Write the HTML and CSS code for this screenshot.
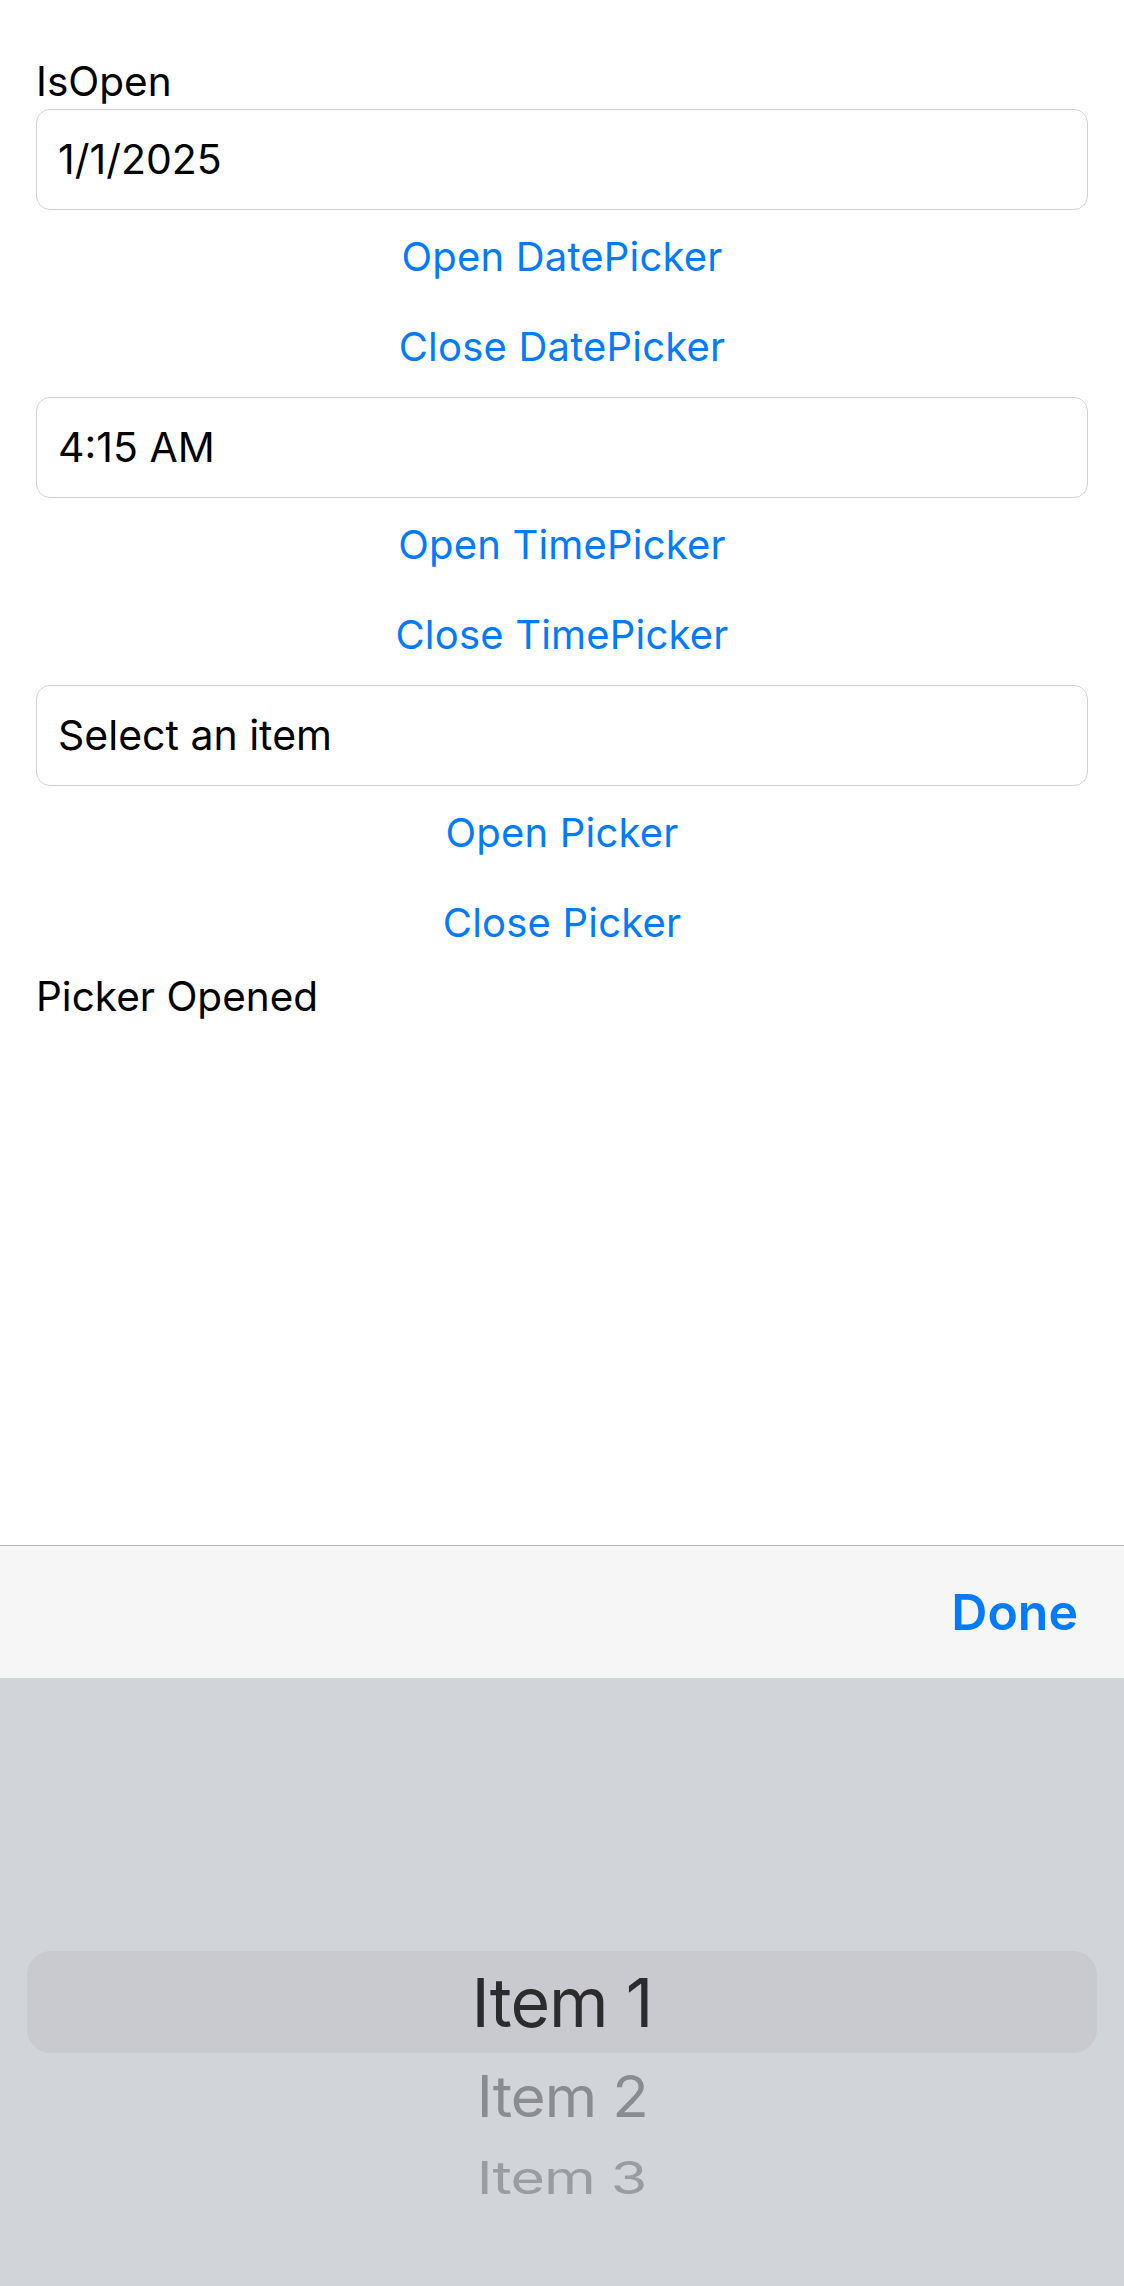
FILE: index.html
```html
<!DOCTYPE html>
<html lang="en">
<head>
<meta charset="utf-8">
<title>IsOpen</title>
<link rel="stylesheet" href="styles.css">
</head>
<body>
<div class="page">
  <main class="content">
    <div class="label">IsOpen</div>
    <div class="entry">1/1/2025</div>
    <div class="button">Open DatePicker</div>
    <div class="button">Close DatePicker</div>
    <div class="entry">4:15 AM</div>
    <div class="button">Open TimePicker</div>
    <div class="button">Close TimePicker</div>
    <div class="entry">Select an item</div>
    <div class="button">Open Picker</div>
    <div class="button">Close Picker</div>
    <div class="label label-status">Picker Opened</div>
  </main>
  <section class="sheet">
    <div class="toolbar">
      <span class="done">Done</span>
    </div>
    <div class="wheel">
      <div class="row row-selected"><span class="item item-1">Item 1</span></div>
      <div class="row row-2"><span class="item item-2">Item 2</span></div>
      <div class="row row-3"><span class="item item-3">Item 3</span></div>
    </div>
  </section>
</div>
</body>
</html>
```
FILE: styles.css
```css
* {
  box-sizing: border-box;
}

html, body {
  margin: 0;
  padding: 0;
  background: #ffffff;
}

body {
  font-family: Inter, "Noto Sans", "Liberation Sans", sans-serif;
  color: #000000;
}

.page {
  display: flex;
  flex-direction: column;
  height: 2286px;
}

.content {
  flex: 1;
  display: flex;
  flex-direction: column;
  gap: 7px;
  padding: 61px 36px 0 36px;
}

.label {
  font-size: 40.5px;
  line-height: 42px;
  height: 42px;
  margin-bottom: -1px;
}

.label-status {
  margin-top: 3px;
}

.entry {
  height: 101px;
  border: 1px solid #d1d1d6;
  border-radius: 14px;
  padding: 0 21px;
  display: flex;
  align-items: center;
  font-size: 41px;
  line-height: 1;
}

.button {
  height: 83px;
  padding-bottom: 4px;
  display: flex;
  align-items: center;
  justify-content: center;
  font-size: 40px;
  letter-spacing: 0.2px;
  color: #007aff;
}

.sheet {
  height: 741px;
  display: flex;
  flex-direction: column;
}

.toolbar {
  height: 133px;
  border-top: 1px solid #b4b4b6;
  background: #f6f6f6;
  display: flex;
  align-items: center;
  justify-content: flex-end;
  padding: 0 46px 0 0;
}

.done {
  font-size: 50px;
  font-weight: 600;
  color: #007aff;
}

.wheel {
  flex: 1;
  background: #d1d4d8;
  padding: 273px 27px 0 27px;
  display: flex;
  flex-direction: column;
}

.row {
  display: flex;
  align-items: center;
  justify-content: center;
}

.row-selected {
  height: 102px;
  background: #c9cacf;
  border-radius: 24px;
}

.row-2 {
  height: 86px;
}

.row-3 {
  height: 75px;
}

.item {
  font-size: 68px;
  letter-spacing: -1px;
  line-height: 1;
}

.item-1 {
  color: #2c2c2e;
}

.item-2 {
  color: #8b8c90;
  transform: scale(0.88, 0.84);
}

.item-3 {
  color: #9b9ca0;
  transform: scale(0.87, 0.66);
}
```
